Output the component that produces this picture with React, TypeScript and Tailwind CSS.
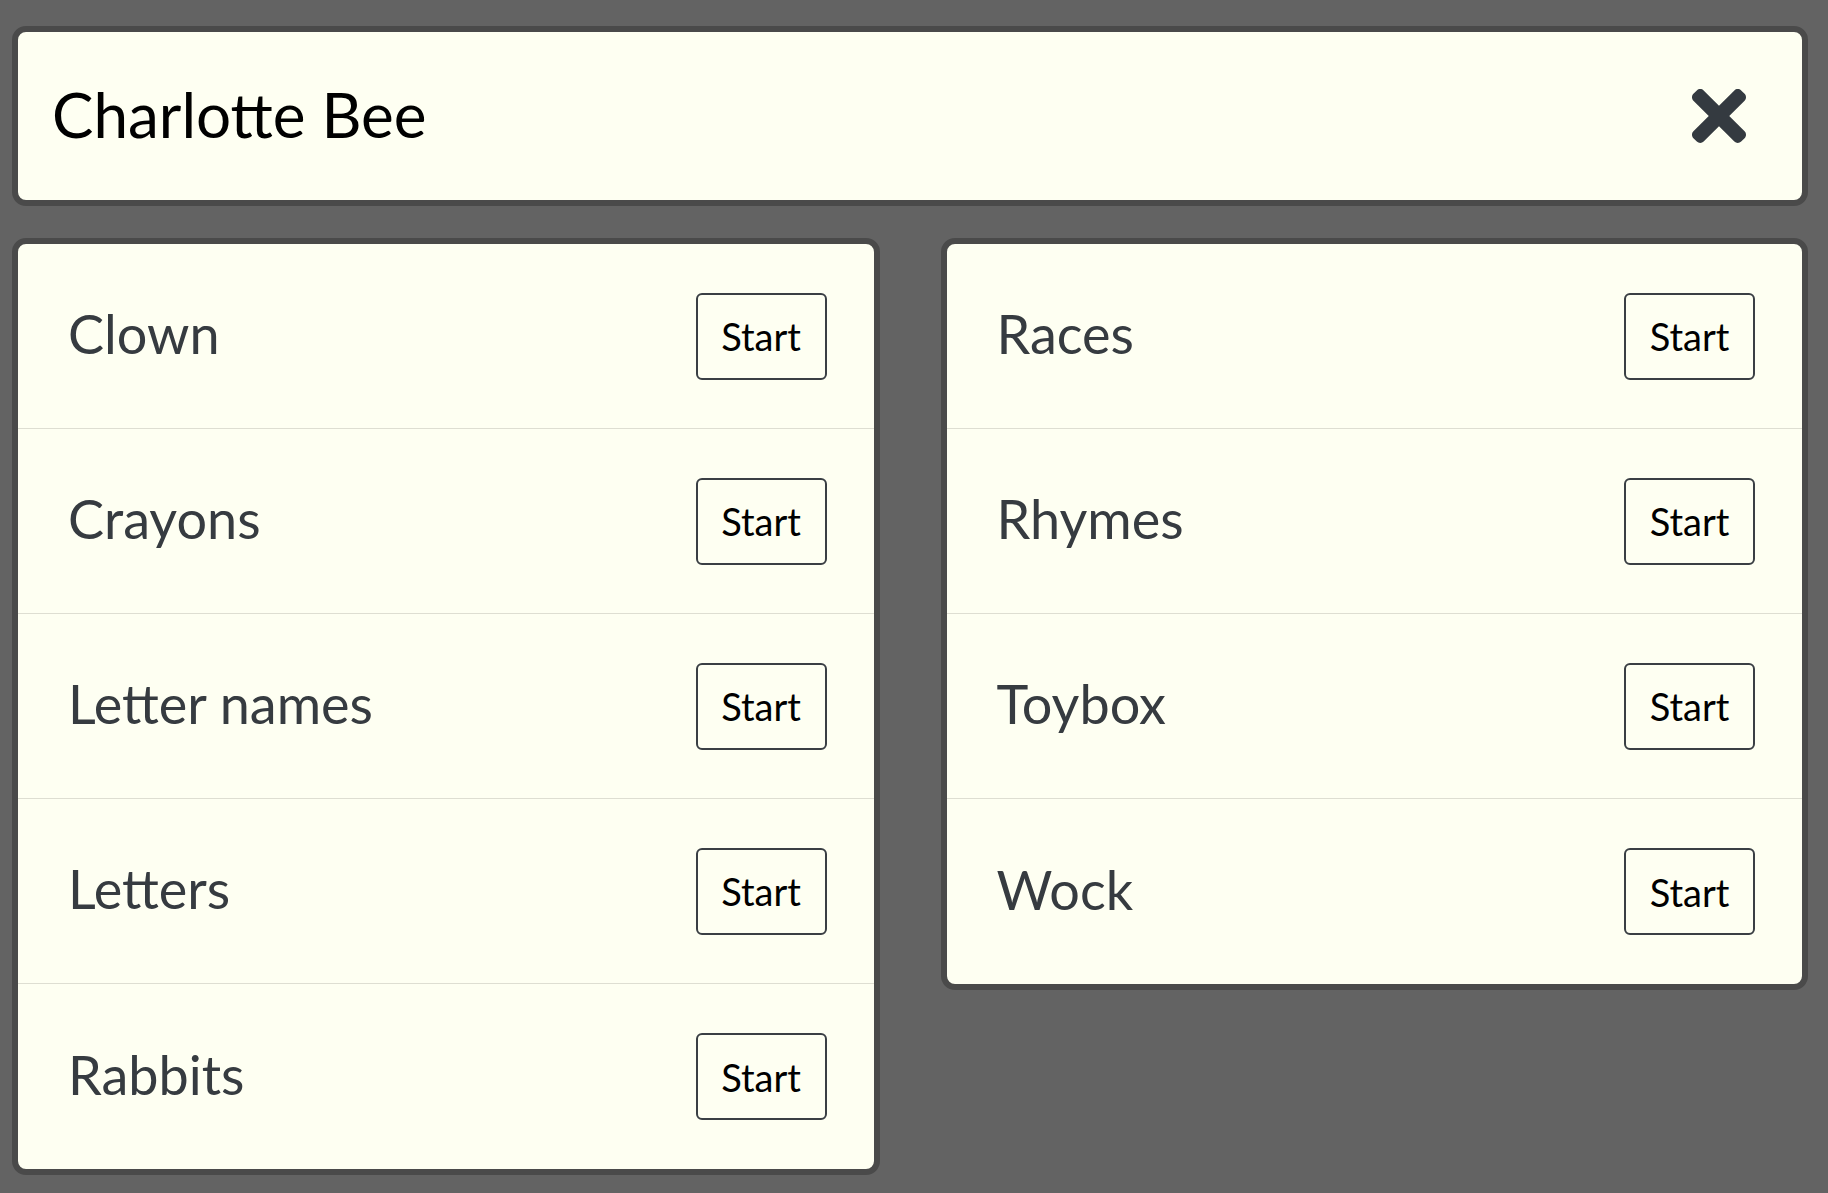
const leftItems = ["Clown", "Crayons", "Letter names", "Letters", "Rabbits"];
const rightItems = ["Races", "Rhymes", "Toybox", "Wock"];

function CloseIcon() {
  return (
    <svg viewBox="0 80 352 352" className="w-[54px] h-[54px]" fill="#343a40">
      <path d="M242.72 256l100.07-100.07c12.28-12.28 12.28-32.19 0-44.48l-22.24-22.24c-12.28-12.28-32.19-12.28-44.48 0L176 189.28 75.93 89.21c-12.28-12.28-32.19-12.28-44.48 0L9.21 111.45c-12.28 12.28-12.28 32.19 0 44.48L109.28 256 9.21 356.07c-12.28 12.28-12.28 32.19 0 44.48l22.24 22.24c12.28 12.28 32.2 12.28 44.48 0L176 322.72l100.07 100.07c12.28 12.28 32.2 12.28 44.48 0l22.24-22.24c12.28-12.28 12.28-32.19 0-44.48L242.72 256z" />
    </svg>
  );
}

function ActivityList({ items }: { items: string[] }) {
  return (
    <div className="rounded-[14px] border-[6px] border-[#4a4a4a] bg-[#fefff2] overflow-hidden">
      {items.map((name, i) => (
        <div
          key={name}
          className={
            "flex items-center justify-between h-[185px] pl-[50px] pr-[47px] " +
            (i < items.length - 1 ? "border-b border-[#deded2]" : "")
          }
        >
          <span className="text-[54px] leading-none text-[#363b40] pb-[4px]">{name}</span>
          <button className="w-[131px] h-[87px] rounded-[6px] border-2 border-[#3a3f44] bg-transparent text-[38px] leading-none text-black">
            Start
          </button>
        </div>
      ))}
    </div>
  );
}

export default function App() {
  return (
    <div
      className="min-h-screen bg-[#636363] pl-[12px] pr-[20px] pt-[26px] pb-[20px]"
      style={{ fontFamily: "Lato, 'Open Sans', sans-serif" }}
    >
      <div className="flex items-center justify-between h-[180px] rounded-[14px] border-[6px] border-[#4a4a4a] bg-[#fefff2] pl-[34px] pr-[56px]">
        <h1 className="text-[62px] leading-none text-black font-normal pb-[4px]">Charlotte Bee</h1>
        <CloseIcon />
      </div>

      <div className="grid grid-cols-2 gap-[61px] items-start mt-[32px]">
        <ActivityList items={leftItems} />
        <ActivityList items={rightItems} />
      </div>
    </div>
  );
}
